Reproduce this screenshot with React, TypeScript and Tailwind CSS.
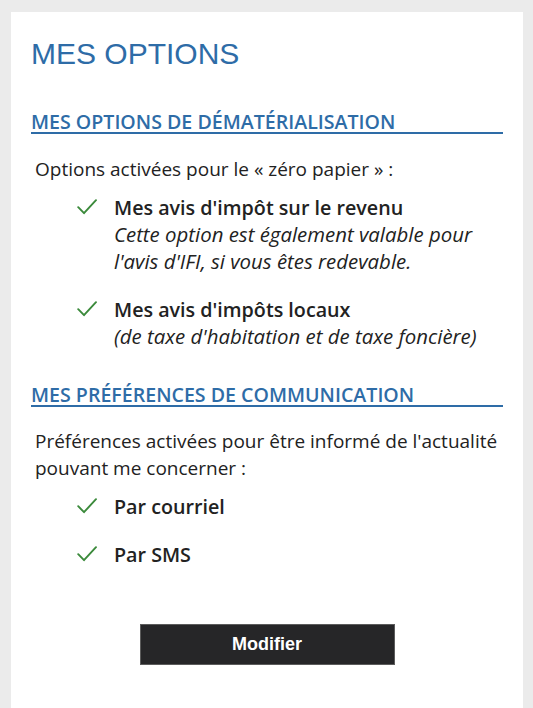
import React from 'react'

const body = { fontFamily: '"Open Sans", "Liberation Sans", sans-serif' }
const arial = { fontFamily: '"Liberation Sans", Arial, sans-serif' }

function Check() {
  return (
    <svg width="20" height="16" viewBox="0 0 20 16" fill="none" className="block">
      <polyline points="1.2,8.2 7,14.2 19,1.2" stroke="#3b8a3b" strokeWidth="1.9" strokeLinecap="round" strokeLinejoin="round" />
    </svg>
  )
}

function Item({ title, children }: { title: string; children?: React.ReactNode }) {
  return (
    <li className="flex">
      <div className="w-[38px] shrink-0 pt-[5px] pl-[1px]">
        <Check />
      </div>
      <div className="leading-[27px] text-[#222]">
        <div className="text-[19.7px] font-semibold">{title}</div>
        {children && <div className="text-[20.4px] italic">{children}</div>}
      </div>
    </li>
  )
}

function SectionTitle({ children, className = '' }: { children: React.ReactNode; className?: string }) {
  return (
    <h2
      className={`border-b-2 border-[#2e6ca7] text-[19.6px] leading-[20px] font-semibold text-[#2e6ca7] ${className}`}
      style={body}
    >
      {children}
    </h2>
  )
}

export default function App() {
  return (
    <div className="min-h-screen bg-[#ebebeb] pt-3 pl-[11px] pr-[10px]">
      <div className="bg-white px-5 pt-6 pb-12" style={body}>
        <h1 className="text-[30px] leading-[36px] text-[#2e6ca7]" style={arial}>
          MES OPTIONS
        </h1>

        <SectionTitle className="mt-10">MES OPTIONS DE DÉMATÉRIALISATION</SectionTitle>

        <div className="pl-1">
          <p className="mt-[22px] text-[19px] leading-[27px] text-[#222]">
            Options activées pour le « zéro papier » :
          </p>
          <ul className="mt-[11px] space-y-[21px] pl-[41px]">
            <Item title="Mes avis d'impôt sur le revenu">
              <span className="whitespace-nowrap">Cette option est également valable pour</span>
              <br />
              <span className="whitespace-nowrap">l'avis d'IFI, si vous êtes redevable.</span>
            </Item>
            <Item title="Mes avis d'impôts locaux">
              <span className="whitespace-nowrap">(de taxe d'habitation et de taxe foncière)</span>
            </Item>
          </ul>
        </div>

        <SectionTitle className="mt-[35px]">MES PRÉFÉRENCES DE COMMUNICATION</SectionTitle>

        <div className="pl-1">
          <p className="mt-[21px] text-[19px] leading-[27px] text-[#222]">
            <span className="whitespace-nowrap">Préférences activées pour être informé de l'actualité</span>
            <br />
            pouvant me concerner :
          </p>
          <ul className="mt-[11px] space-y-[21px] pl-[41px]">
            <Item title="Par courriel" />
            <Item title="Par SMS" />
          </ul>
        </div>

        <div className="mt-[56px] flex justify-center">
          <button
            type="button"
            className="h-[41px] w-[255px] border border-[#5c5c5c] bg-[#262628] text-[18px] font-bold text-white"
            style={arial}
          >
            Modifier
          </button>
        </div>
      </div>
    </div>
  )
}
